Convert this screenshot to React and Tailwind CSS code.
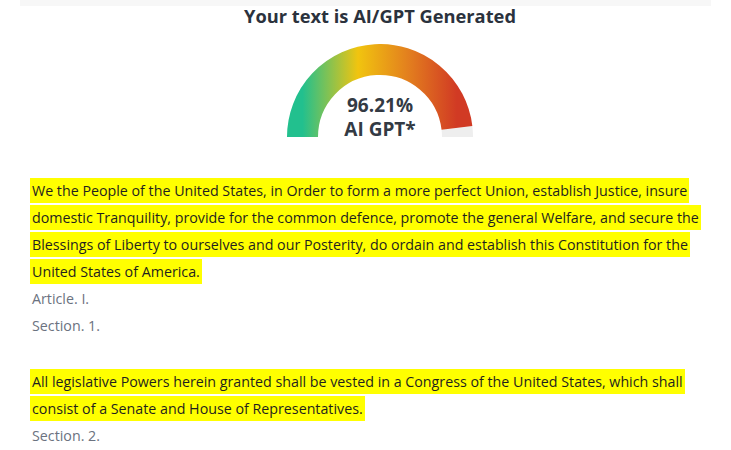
import React from 'react';

// Gauge that shows the detected AI share
function Gauge({ value }) {
  const cx = 94, cy = 93, r = 77.5;
  const a = Math.PI * (1 - value / 100);
  const ex = cx + r * Math.cos(a);
  const ey = cy - r * Math.sin(a);
  return (
    <div className="relative w-[188px] h-[94px]">
      <svg width="188" height="94" viewBox="0 0 188 94">
        <defs>
          <linearGradient id="g" x1="0" y1="0" x2="1" y2="0">
            <stop offset="0" stopColor="#22c08e" />
            <stop offset="0.36" stopColor="#f1c40f" />
            <stop offset="0.68" stopColor="#e3801e" />
            <stop offset="1" stopColor="#d13a24" />
          </linearGradient>
        </defs>
        <path d={`M ${cx + r} ${cy} A ${r} ${r} 0 0 0 ${ex} ${ey}`} fill="none" stroke="#eeeeee" strokeWidth="31" />
        <path d={`M ${cx - r} ${cy} A ${r} ${r} 0 0 1 ${ex} ${ey}`} fill="none" stroke="url(#g)" strokeWidth="31" />
      </svg>
      <div className="absolute inset-x-0 bottom-[-3px] flex flex-col items-center text-[19px] leading-[24px] font-bold text-[#333a44]">
        <span>{value}%</span>
        <span>AI GPT*</span>
      </div>
    </div>
  );
}

const Hl = ({ children }) => (
  <span className="bg-[#ffff00] py-[3px] px-[2px] -mx-[2px] box-decoration-clone text-[#1f1f1f]">{children}</span>
);

export default function App() {
  return (
    <div className="w-[731px] h-[450px] bg-white overflow-hidden" style={{ fontFamily: '"Open Sans", sans-serif' }}>
      <div className="mx-[20px] h-[6px] bg-[#f7f7f7]" />
      <div className="pl-[29px]">
        <h1 className="text-center text-[18.3px] leading-[20px] font-bold text-[#2b323d]">Your text is AI/GPT Generated</h1>
        <div className="flex justify-center mt-[18px]">
          <Gauge value={96.21} />
        </div>
      </div>
      <div className="px-[32px] pt-[39px] text-[14.25px] leading-[27px] text-[#6b7280]">
        <p>
          <Hl>We the People of the United States, in Order to form a more perfect Union, establish Justice, insure domestic Tranquility, provide for the common defence, promote the general Welfare, and secure the Blessings of Liberty to ourselves and our Posterity, do ordain and establish this Constitution for the United States of America.</Hl>
        </p>
        <p>Article. I.</p>
        <p>Section. 1.</p>
        <p className="h-[29px]" />
        <p>
          <Hl>All legislative Powers herein granted shall be vested in a Congress of the United States, which shall consist of a Senate and House of Representatives.</Hl>
        </p>
        <p>Section. 2.</p>
      </div>
    </div>
  );
}
